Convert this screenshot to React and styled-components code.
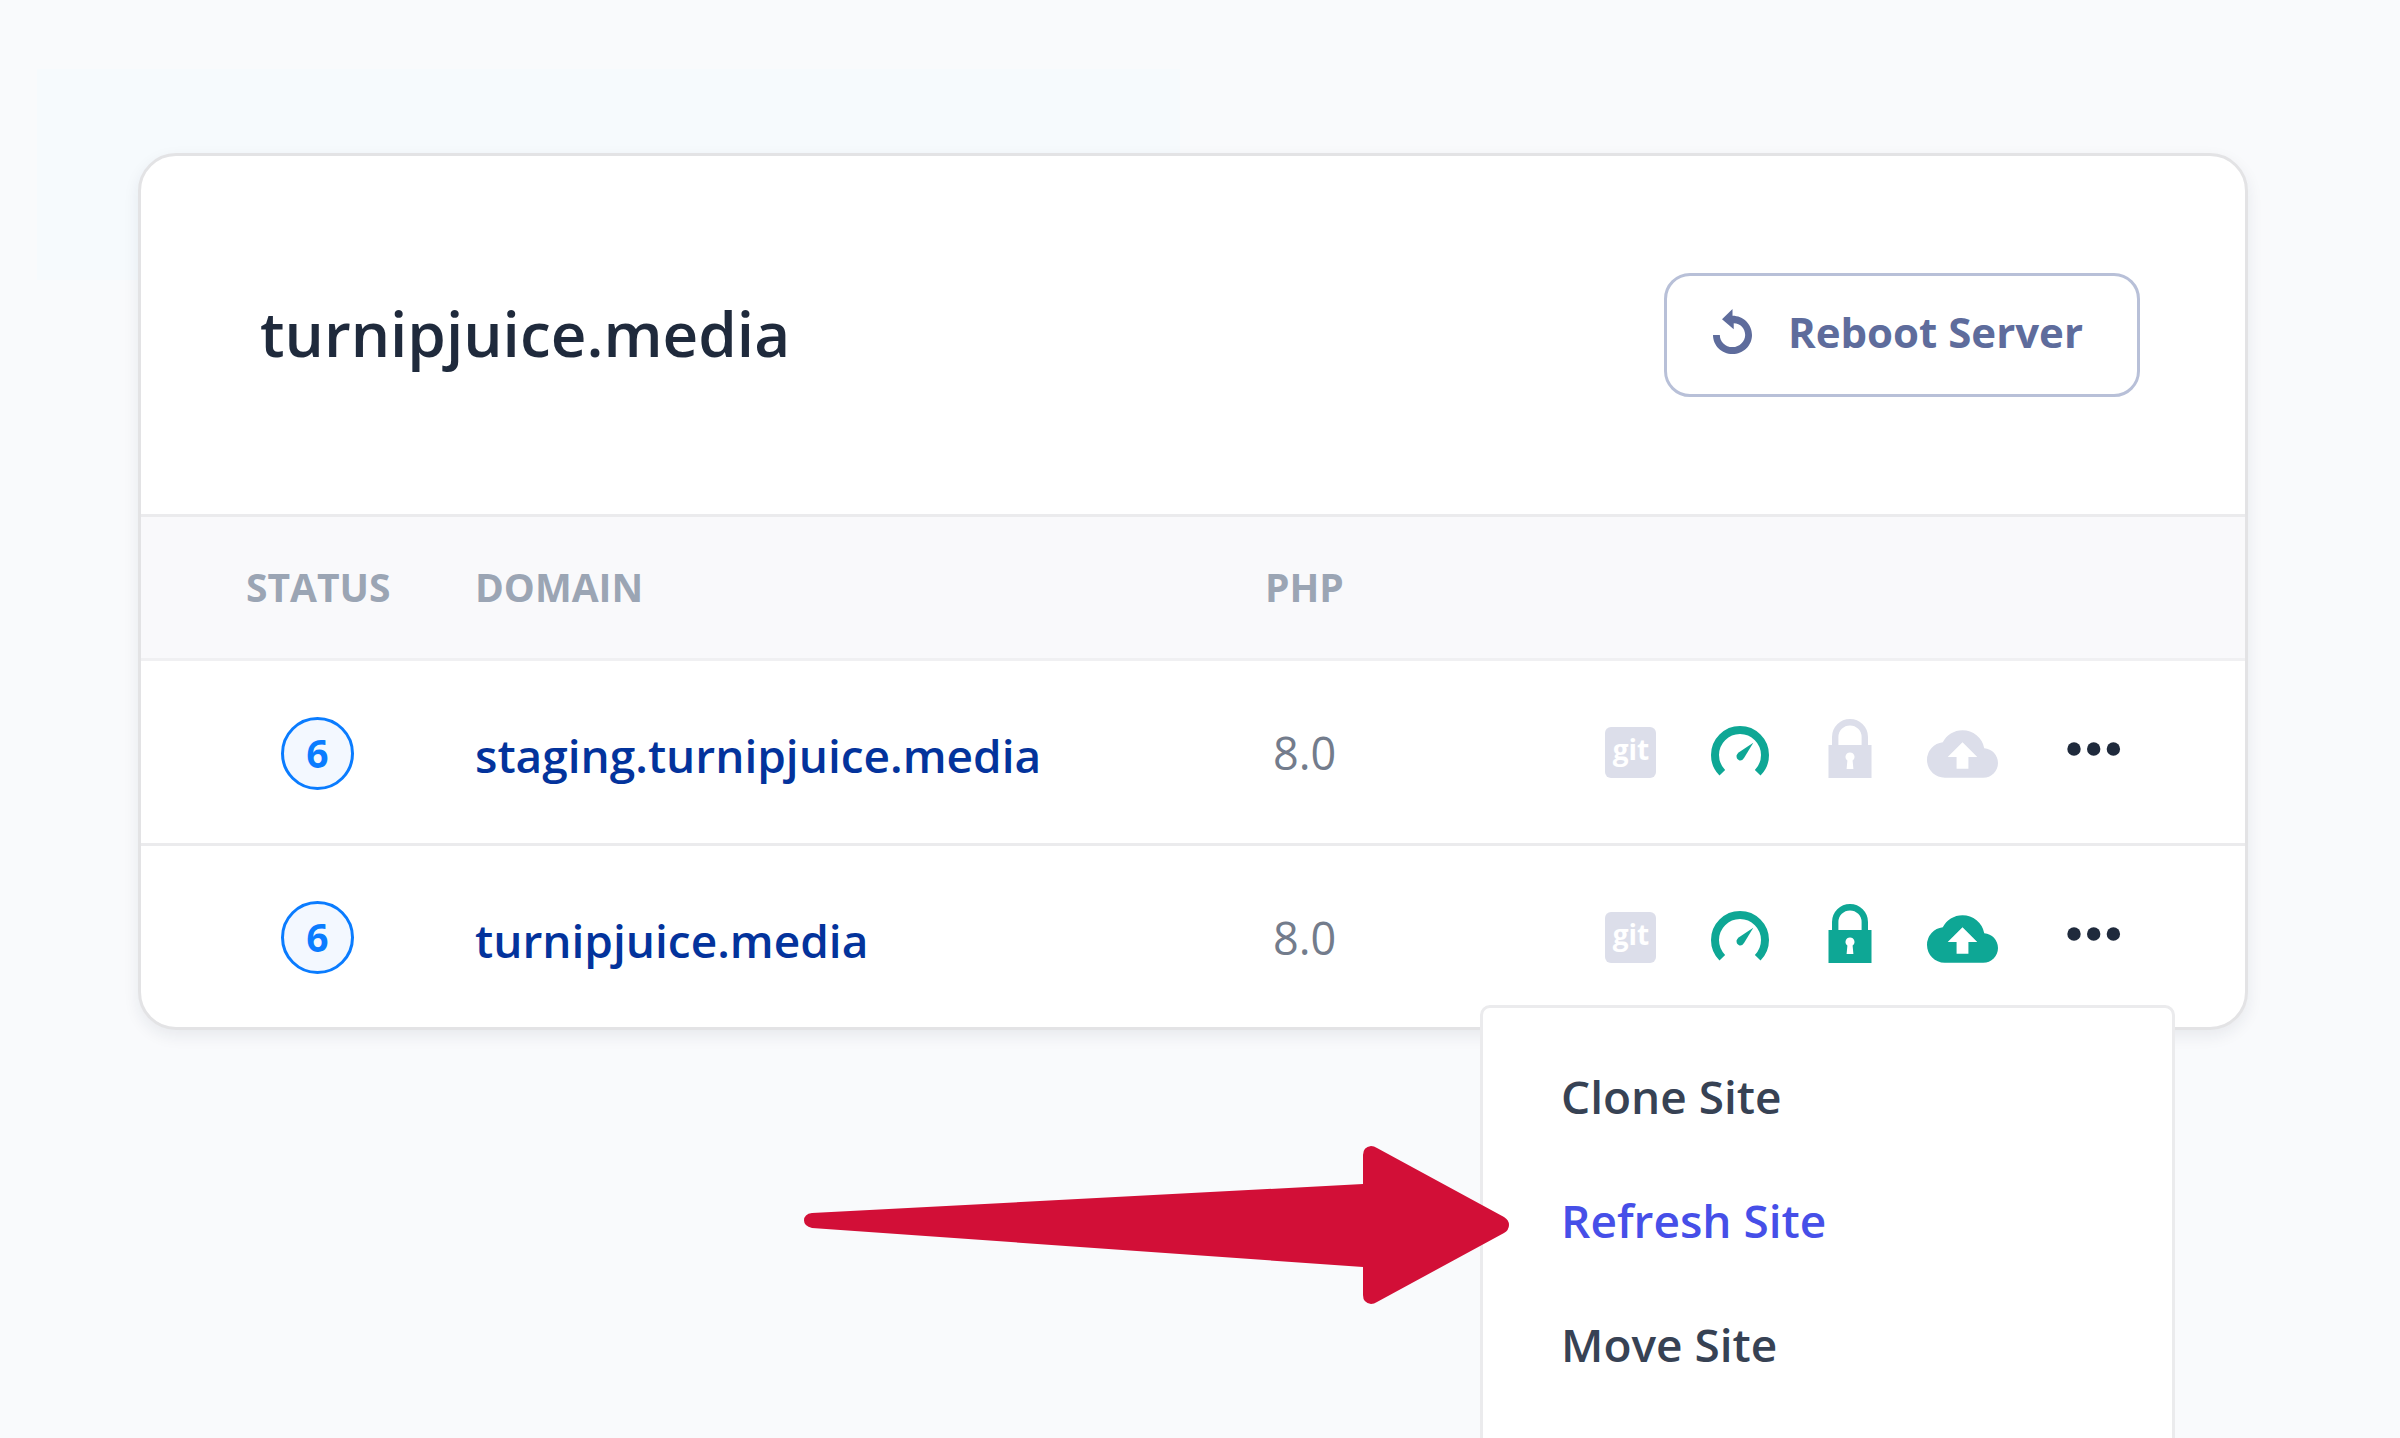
import React from "react";
import styled, { createGlobalStyle } from "styled-components";
import { MdCloudUpload } from "react-icons/md";

const GlobalStyle = createGlobalStyle`
  *, *::before, *::after { box-sizing: border-box; }
  body {
    margin: 0;
    background: #f9fafc;
    font-family: "Open Sans", "Noto Sans", sans-serif;
  }
`;

const Page = styled.main`
  position: relative;
  min-height: 100vh;
  overflow: hidden;
  padding: 153px 152px 0 138px;
`;

const Tint = styled.div`
  position: absolute;
  top: 69px;
  left: 37px;
  width: 1143px;
  height: 211px;
  background: #f6fafd;
`;

const Card = styled.section`
  position: relative;
  background: #fff;
  border: 3px solid #e3e3e5;
  border-radius: 38px;
  box-shadow: 0 6px 16px rgba(30, 35, 60, 0.08);
`;

const CardHeader = styled.header`
  display: flex;
  align-items: center;
  justify-content: space-between;
  height: 358px;
  padding: 0 105px 0 119px;
`;

const Title = styled.h1`
  margin: 0;
  padding-bottom: 4px;
  font-size: 62px;
  font-weight: 600;
  line-height: 88px;
  color: #1f2a3c;
`;

const RebootButton = styled.button`
  display: flex;
  align-items: center;
  gap: 36px;
  height: 124px;
  padding: 0 54px 8px 46px;
  border: 3px solid #b8c0d8;
  border-radius: 26px;
  background: #fff;
  color: #5e6c9c;
  font-family: inherit;
  font-size: 42px;
  font-weight: 700;
  cursor: pointer;
`;

const SiteTable = styled.table`
  width: 100%;
  table-layout: fixed;
  border-collapse: separate;
  border-spacing: 0;
`;

const HeadCell = styled.th`
  width: ${(p) => p.$width || "auto"};
  height: 147px;
  padding: 0 0 2px ${(p) => p.$indent || 0}px;
  border-top: 3px solid #ebebed;
  border-bottom: 3px solid #f0f0f2;
  background: #f9f9fb;
  color: #9ba5b4;
  font-size: 39px;
  font-weight: 700;
  line-height: 52px;
  text-align: left;
`;

const Cell = styled.td`
  height: 181px;
  padding: ${(p) => p.$top || 0}px 0 ${(p) => p.$bottom || 0}px ${(p) => p.$indent || 0}px;

  tr:not(:last-child) > & {
    height: 185px;
    border-bottom: 3px solid #ebebed;
  }
`;

const Badge = styled.span`
  display: flex;
  align-items: center;
  justify-content: center;
  width: 73px;
  height: 73px;
  padding-bottom: 2px;
  border: 3px solid #0a7cff;
  border-radius: 50%;
  background: #f3f8ff;
  color: #0a7cff;
  font-size: 39px;
  font-weight: 700;
`;

const DomainLink = styled.a`
  color: #03339c;
  font-size: 46px;
  font-weight: 600;
  line-height: 60px;
  text-decoration: none;
`;

const Version = styled.span`
  color: #737c8c;
  font-size: 45px;
  line-height: 60px;
`;

const Tools = styled.div`
  position: relative;
  display: flex;
  align-items: flex-end;
  height: 60px;
`;

const Tool = styled.span`
  display: flex;
  margin-right: ${(p) => p.$gap}px;
  color: ${(p) => (p.$on ? "#0ea795" : "#dcdeea")};
  svg { display: block; }
`;

const MoreButton = styled.button`
  display: flex;
  align-self: center;
  padding: 2px 0 0;
  border: 0;
  background: none;
  color: #1f2a3c;
  cursor: pointer;
`;

const Menu = styled.ul`
  position: absolute;
  z-index: 1;
  top: 100%;
  right: 70px;
  width: 695px;
  min-height: 480px;
  margin: 42px 0 0;
  padding: 26px 0;
  border: 3px solid #ebebed;
  border-radius: 10px;
  background: #fff;
  list-style: none;
`;

const MenuItem = styled.a`
  display: flex;
  align-items: center;
  height: 124px;
  padding: 0 78px;
  color: ${(p) => (p.$active ? "#464fe8" : "#374254")};
  font-size: 46px;
  font-weight: 600;
  text-decoration: none;
`;

const Pointer = styled.svg`
  position: absolute;
  z-index: 2;
  top: 1145px;
  left: 804px;
`;

const ReplayIcon = () => (
  <svg width="39" height="45" viewBox="4 1 16 20" preserveAspectRatio="none" fill="currentColor" aria-hidden="true">
    <path d="M12 4V1L7.700 5.500l4.800 4.500V7.300c2.800 0 4.700 2.500 4.700 5.200s-2.200 5.400-5.200 5.400-5.200-2.400-5.200-5.400H4c0 4.700 3.580 8.500 8 8.500s8-3.800 8-8.500S16.400 4 12 4z" />
  </svg>
);

const GitIcon = () => (
  <svg width="51" height="51" viewBox="0 0 51 51" aria-hidden="true">
    <rect width="51" height="51" rx="6" fill="currentColor" />
    <text x="26" y="33" textAnchor="middle" fontSize="28" fontWeight="700" fill="#fff">
      git
    </text>
  </svg>
);

const GaugeIcon = () => (
  <svg width="58" height="52" viewBox="0 0 58 52" aria-hidden="true">
    <path d="M11.300 46.700A25 25 0 1 1 46.700 46.700" fill="none" stroke="currentColor" strokeWidth="8" />
    <path d="M42.300 16.800L33 32q-2 3-4.500 2.400Q25 33 25.600 29.500q.4-1.500 2-3z" fill="currentColor" />
  </svg>
);

const LockIcon = () => (
  <svg width="44" height="59" viewBox="0 0 44 59" aria-hidden="true">
    <path d="M7.200 28V18a14.800 14.800 0 0 1 29.600 0v10" fill="none" stroke="currentColor" strokeWidth="6.400" />
    <path d="M.5 26h43v33H.5z" fill="currentColor" />
    <path d="M22 33.500a4.400 4.400 0 0 0-2.600 8L18.600 50h6.800l-.8-8.500a4.400 4.400 0 0 0-2.600-8z" fill="#fff" />
  </svg>
);

const DotsIcon = () => (
  <svg width="54" height="14" viewBox="0 0 54 14" fill="currentColor" aria-hidden="true">
    <circle cx="7" cy="7" r="6.700" />
    <circle cx="26.700" cy="7" r="6.700" />
    <circle cx="46.400" cy="7" r="6.700" />
  </svg>
);

const sites = [
  { domain: "staging.turnipjuice.media", php: "8.0", secure: false, backup: false, menu: false },
  { domain: "turnipjuice.media", php: "8.0", secure: true, backup: true, menu: true },
];

const actions = ["Clone Site", "Refresh Site", "Move Site"];

export default function App() {
  return (
    <Page>
      <GlobalStyle />
      <Tint />
      <Card>
        <CardHeader>
          <Title>turnipjuice.media</Title>
          <RebootButton type="button">
            <ReplayIcon />
            Reboot Server
          </RebootButton>
        </CardHeader>
        <SiteTable>
          <thead>
            <tr>
              <HeadCell $width="334px" $indent={105}>STATUS</HeadCell>
              <HeadCell>DOMAIN</HeadCell>
              <HeadCell $width="340px">PHP</HeadCell>
              <HeadCell $width="640px" aria-label="Actions" />
            </tr>
          </thead>
          <tbody>
            {sites.map((site) => (
              <tr key={site.domain}>
                <Cell $indent={140} $top={2}><Badge>6</Badge></Cell>
                <Cell $top={6}><DomainLink href="#site">{site.domain}</DomainLink></Cell>
                <Cell $indent={8} $top={2}><Version>{site.php}</Version></Cell>
                <Cell $bottom={8}>
                  <Tools>
                    <Tool $gap={55}><GitIcon /></Tool>
                    <Tool $gap={59} $on><GaugeIcon /></Tool>
                    <Tool $gap={55} $on={site.secure}><LockIcon /></Tool>
                    <Tool $gap={69} $on={site.backup}>
                      <svg width="71" height="48" viewBox="0 4 24 16"><MdCloudUpload size={24} /></svg>
                    </Tool>
                    <MoreButton type="button" aria-label="More actions"><DotsIcon /></MoreButton>
                    {site.menu && (
                      <Menu>
                        {actions.map((action) => (
                          <li key={action}>
                            <MenuItem href="#action" $active={action === "Refresh Site"}>{action}</MenuItem>
                          </li>
                        ))}
                      </Menu>
                    )}
                  </Tools>
                </Cell>
              </tr>
            ))}
          </tbody>
        </SiteTable>
      </Card>
      <Pointer width="706" height="160" viewBox="0 0 706 160" aria-hidden="true">
        <path
          d="M8 68L559 39V10Q559 2 567 1Q570 1 573 3L700 72Q705 75 705 80Q705 85 700 88L573 157Q570 159 567 159Q559 158 559 150V122L8 83Q0 81 0 75.500Q0 69 8 68z"
          fill="#d20f37"
        />
      </Pointer>
    </Page>
  );
}
